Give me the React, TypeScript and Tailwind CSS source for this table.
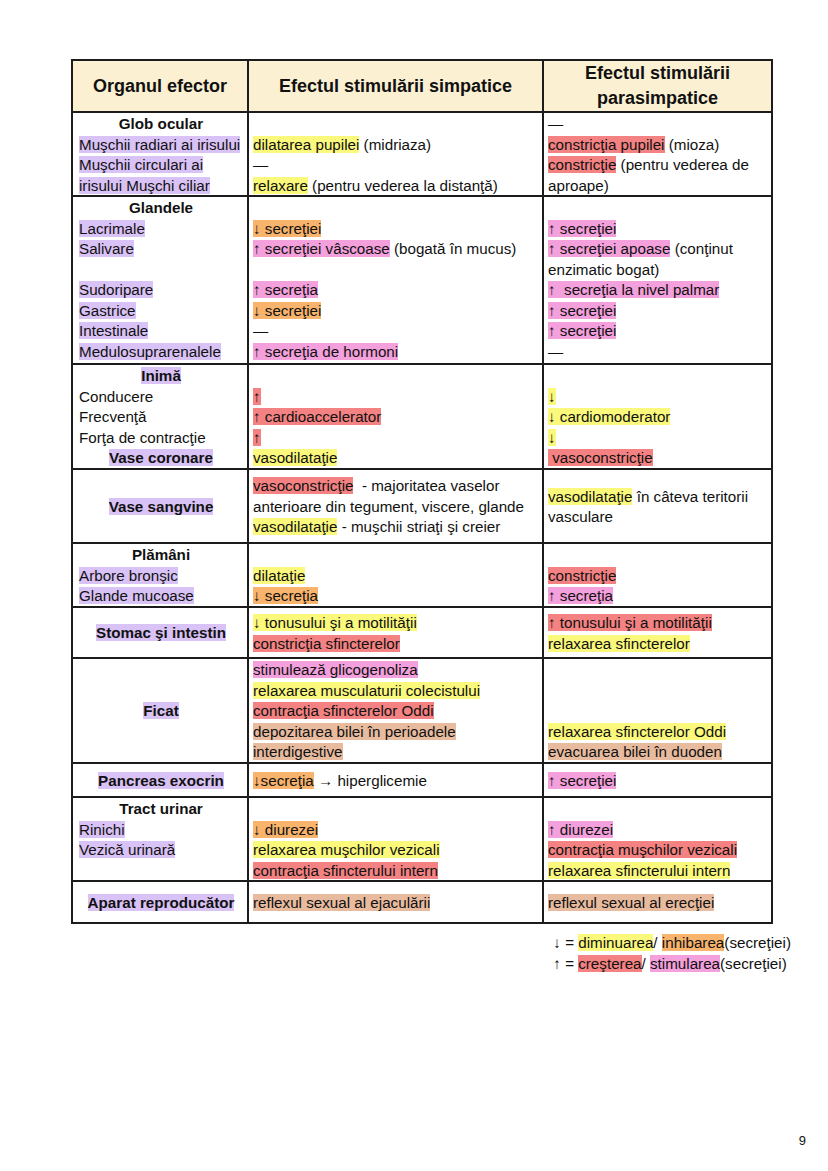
import React from "react";

// Highlight colours used in the table
type Tone = "purple" | "yellow" | "orange" | "pink" | "red" | "tan";

const toneClass: Record<Tone, string> = {
    purple: "bg-[#d9c2f6]",
    yellow: "bg-[#fbf97c]",
    orange: "bg-[#f8b36c]",
    pink: "bg-[#f4a0dc]",
    red: "bg-[#f48282]",
    tan: "bg-[#e8bb9f]",
};

type Seg = string | [string, Tone];

interface ILine {
    segs: Seg[];
    bold?: boolean;
    center?: boolean;
}

interface IRow {
    height: string;
    top?: boolean;
    c1: ILine[];
    c2: ILine[];
    c3: ILine[];
}

const L = (...segs: Seg[]): ILine => ({ segs });
const B = (text: string, tone?: Tone): ILine => ({ segs: [tone ? [text, tone] : text], bold: true, center: true });
const E: ILine = { segs: [] };
const P = (text: string): ILine => L([text, "purple"]);

const rows: IRow[] = [
    {
        height: "h-[84px]",
        top: true,
        c1: [B("Glob ocular"), P("Muşchii radiari ai irisului"), P("Muşchii circulari ai"), P("irisului Muşchi ciliar")],
        c2: [E, L(["dilatarea pupilei", "yellow"], " (midriaza)"), L("—"), L(["relaxare", "yellow"], " (pentru vederea la distanţă)")],
        c3: [L("—"), L(["constricţia pupilei", "red"], " (mioza)"), L(["constricţie", "red"], " (pentru vederea de"), L("aproape)")],
    },
    {
        height: "h-[168px]",
        top: true,
        c1: [
            B("Glandele"),
            P("Lacrimale"),
            P("Salivare"),
            E,
            P("Sudoripare"),
            P("Gastrice"),
            P("Intestinale"),
            P("Medulosuprarenalele"),
        ],
        c2: [
            E,
            L(["↓ secreţiei", "orange"]),
            L(["↑ secreţiei vâscoase", "pink"], " (bogată în mucus)"),
            E,
            L(["↑ secreţia", "pink"]),
            L(["↓ secreţiei", "orange"]),
            L("—"),
            L(["↑ secreţia de hormoni", "pink"]),
        ],
        c3: [
            E,
            L(["↑ secreţiei", "pink"]),
            L(["↑ secreţiei apoase", "pink"], " (conţinut"),
            L("enzimatic bogat)"),
            L(["↑\u00a0 secreţia la nivel palmar", "pink"]),
            L(["↑ secreţiei", "pink"]),
            L(["↑ secreţiei", "pink"]),
            L("—"),
        ],
    },
    {
        height: "h-[105px]",
        top: true,
        c1: [B("Inimă", "purple"), L("Conducere"), L("Frecvenţă"), L("Forţa de contracţie"), B("Vase coronare", "purple")],
        c2: [E, L(["↑", "red"]), L(["↑ cardioaccelerator", "red"]), L(["↑", "red"]), L(["vasodilataţie", "yellow"])],
        c3: [E, L(["↓", "yellow"]), L(["↓ cardiomoderator", "yellow"]), L(["↓", "yellow"]), L(["\u00a0vasoconstricţie", "red"])],
    },
    {
        height: "h-[74px]",
        c1: [B("Vase sangvine", "purple")],
        c2: [
            L(["vasoconstricţie", "red"], "\u00a0 - majoritatea vaselor"),
            L("anterioare din tegument, viscere, glande"),
            L(["vasodilataţie", "yellow"], " - muşchii striaţi şi creier"),
        ],
        c3: [L(["vasodilataţie", "yellow"], " în câteva teritorii"), L("vasculare")],
    },
    {
        height: "h-[64px]",
        top: true,
        c1: [B("Plămâni"), P("Arbore bronşic"), P("Glande mucoase")],
        c2: [E, L(["dilataţie", "yellow"]), L(["↓ secreţia", "orange"])],
        c3: [E, L(["constricţie", "red"]), L(["↑ secreţia", "pink"])],
    },
    {
        height: "h-[51px]",
        c1: [B("Stomac şi intestin", "purple")],
        c2: [L(["↓ tonusului şi a motilităţii", "yellow"]), L(["constricţia sfincterelor", "red"])],
        c3: [L(["↑ tonusului şi a motilităţii", "red"]), L(["relaxarea sfincterelor", "yellow"])],
    },
    {
        height: "h-[105px]",
        top: true,
        c1: [B("Ficat", "purple")],
        c2: [
            L(["stimulează glicogenoliza", "pink"]),
            L(["relaxarea musculaturii colecistului", "yellow"]),
            L(["contracţia sfincterelor Oddi", "red"]),
            L(["depozitarea bilei în perioadele", "tan"]),
            L(["interdigestive", "tan"]),
        ],
        c3: [E, E, E, L(["relaxarea sfincterelor Oddi", "yellow"]), L(["evacuarea bilei în duoden", "tan"])],
    },
    {
        height: "h-[34px]",
        c1: [B("Pancreas exocrin", "purple")],
        c2: [L(["↓secreţia", "orange"], " → hiperglicemie")],
        c3: [L(["↑ secreţiei", "pink"])],
    },
    {
        height: "h-[84px]",
        top: true,
        c1: [B("Tract urinar"), P("Rinichi"), P("Vezică urinară")],
        c2: [
            E,
            L(["↓ diurezei", "orange"]),
            L(["relaxarea muşchilor vezicali", "yellow"]),
            L(["contracţia sfincterului intern", "red"]),
        ],
        c3: [
            E,
            L(["↑ diurezei", "pink"]),
            L(["contracţia muşchilor vezicali", "red"]),
            L(["relaxarea sfincterului intern", "yellow"]),
        ],
    },
    {
        height: "h-[42px]",
        c1: [B("Aparat reproducător", "purple")],
        c2: [L(["reflexul sexual al ejaculării", "tan"])],
        c3: [L(["reflexul sexual al erecţiei", "tan"])],
    },
];

const Segment = ({ seg }: { seg: Seg }) =>
    typeof seg === "string" ? <>{seg}</> : <span className={toneClass[seg[1]]}>{seg[0]}</span>;

const Lines = ({ lines }: { lines: ILine[] }) => (
    <>
        {lines.map((line, i) => (
            <div
                key={i}
                className={`h-[20.5px] whitespace-nowrap ${line.bold ? "font-bold" : ""} ${line.center ? "text-center" : ""}`}
            >
                {line.segs.map((seg, j) => (
                    <Segment key={j} seg={seg} />
                ))}
            </div>
        ))}
    </>
);

// multi-line blocks sit at the top of the row, lone labels are centred
const cellAlign = (row: IRow, lines: ILine[]) => (row.top && lines.length > 1 ? "align-top" : "align-middle");

const App = () => {
    return (
        <div className="min-h-[1171px] w-[828px] flex flex-col bg-white text-[#111] font-['Liberation_Sans',Arial,sans-serif] text-[15.2px] leading-[21px]">
            <div className="pt-[59px] pl-[71px]">
                <table className="table-fixed border-collapse w-[700px]">
                    <colgroup>
                        <col className="w-[176px]" />
                        <col className="w-[295px]" />
                        <col className="w-[229px]" />
                    </colgroup>
                    <thead>
                        <tr className="h-[51px] bg-[#fcf0d2] text-[18px] leading-[25px] font-bold">
                            <th className="border-2 border-[#1c1c1c] text-center align-middle">Organul efector</th>
                            <th className="border-2 border-[#1c1c1c] text-center align-middle">
                                Efectul stimulării simpatice
                            </th>
                            <th className="border-2 border-[#1c1c1c] text-center align-middle">
                                Efectul stimulării
                                <br />
                                parasimpatice
                            </th>
                        </tr>
                    </thead>
                    <tbody>
                        {rows.map((row, i) => (
                            <tr key={i} className={row.height}>
                                <td className={`border-2 border-[#1c1c1c] pl-1.5 pr-1 ${cellAlign(row, row.c1)}`}>
                                    <Lines lines={row.c1} />
                                </td>
                                <td className={`border-2 border-[#1c1c1c] pl-1 pr-1 ${cellAlign(row, row.c2)}`}>
                                    <Lines lines={row.c2} />
                                </td>
                                <td className={`border-2 border-[#1c1c1c] pl-1 pr-1 ${cellAlign(row, row.c3)}`}>
                                    <Lines lines={row.c3} />
                                </td>
                            </tr>
                        ))}
                    </tbody>
                </table>
                <div className="w-[720px] mt-[8px] flex justify-end">
                    <div>
                        <div>
                            ↓ = <span className={toneClass.yellow}>diminuarea</span>/{" "}
                            <span className={toneClass.orange}>inhibarea</span>(secreţiei)
                        </div>
                        <div>
                            ↑ = <span className={toneClass.red}>creşterea</span>/{" "}
                            <span className={toneClass.pink}>stimularea</span>(secreţiei)
                        </div>
                    </div>
                </div>
            </div>
            <div className="mt-auto pb-[20px] pr-[22px] text-right text-[13px]">9</div>
        </div>
    );
};

export default App;
